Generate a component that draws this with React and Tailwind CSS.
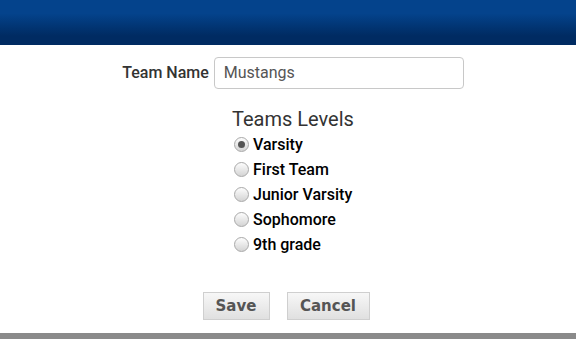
const LEVELS = ["Varsity", "First Team", "Junior Varsity", "Sophomore", "9th grade"]

function Radio({ checked }) {
  return (
    <span className="flex items-center justify-center w-[15px] h-[15px] rounded-full border border-[#a9a9a9] bg-gradient-to-b from-[#fdfdfd] to-[#d4d4d4] shrink-0">
      {checked && <span className="w-[7px] h-[7px] rounded-full bg-[#555]" />}
    </span>
  )
}

export default function App() {
  return (
    <div className="w-[576px] h-[339px] bg-white flex flex-col font-['Roboto',sans-serif]">
      {/* header */}
      <div className="h-[45px] bg-gradient-to-b from-[#04438c] from-30% to-[#002b62] to-80%" />

      <div className="flex-1 flex flex-col">
        <div className="flex items-start justify-center mt-[12px] pl-[10px]">
          <label className="text-[16px] font-medium text-[#333] pt-[4px] mr-[5px]">Team Name</label>
          <div className="w-[250px] h-[32px] border border-[#c8c8c8] rounded-[4px] flex items-center px-[9px] text-[16px] text-[#555]">
            Mustangs
          </div>
        </div>

        <div className="ml-[232px] mt-[18px]">
          <div className="text-[20px] text-[#333] leading-[25px]">Teams Levels</div>
          <div className="flex flex-col">
            {LEVELS.map((l, i) => (
              <div key={l} className="flex items-center gap-[4px] h-[25px] pl-[2px]">
                <Radio checked={i === 0} />
                <span className="text-[16px] font-medium text-black">{l}</span>
              </div>
            ))}
          </div>
        </div>

        <div className="flex justify-center gap-[17px] mt-[35px] pr-[4px]">
          <button className="w-[67px] h-[28px] border border-[#cfcfcf] bg-gradient-to-b from-[#f7f7f7] to-[#e0e0e0] font-['DejaVu_Sans',sans-serif] font-bold text-[15px] text-[#555]">
            Save
          </button>
          <button className="w-[83px] h-[28px] border border-[#cfcfcf] bg-gradient-to-b from-[#f7f7f7] to-[#e0e0e0] font-['DejaVu_Sans',sans-serif] font-bold text-[15px] text-[#555]">
            Cancel
          </button>
        </div>
      </div>

      <div className="h-[6px] bg-[#8a8a8a]" />
    </div>
  )
}
